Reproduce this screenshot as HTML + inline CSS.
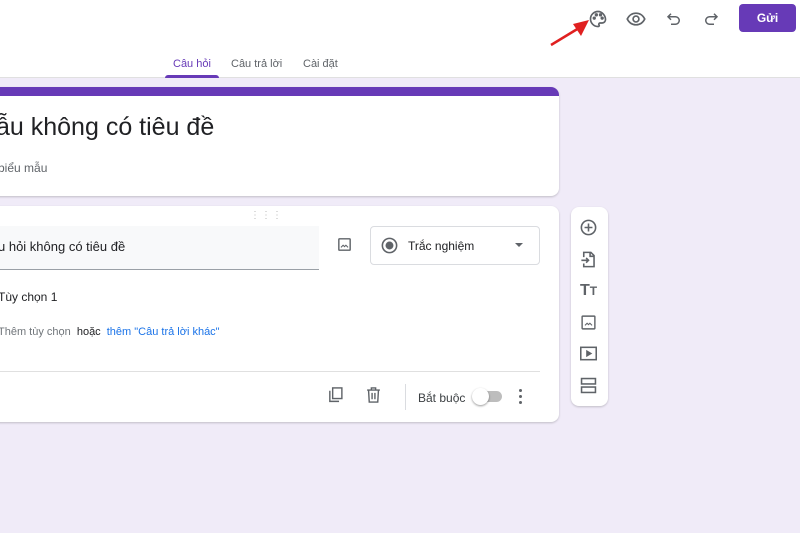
<!DOCTYPE html>
<html><head><meta charset="utf-8"><style>
*{margin:0;padding:0;box-sizing:border-box}
body{width:800px;height:533px;overflow:hidden;background:#f0ebf8;font-family:"Liberation Sans",Arial,sans-serif;position:relative;color:#202124}
.abs{position:absolute}
.hdr{left:0;top:0;width:800px;height:78px;background:#fff;border-bottom:1px solid #e0e0e0}
.tab{top:58px;font-size:11px;color:#5f6368}
.card{background:#fff;border-radius:8px;box-shadow:0 1px 2px rgba(0,0,0,.2)}
svg{position:absolute}
</style></head><body>
<div class="abs hdr"></div>
<div class="abs tab" style="left:173px;color:#673ab7">Câu hỏi</div>
<div class="abs tab" style="left:231px">Câu trả lời</div>
<div class="abs tab" style="left:303px">Cài đặt</div>
<div class="abs" style="left:165px;top:75px;width:54px;height:3px;background:#673ab7;border-radius:3px 3px 0 0"></div>
<svg style="left:588px;top:9px" width="20" height="20" viewBox="0 0 24 24" fill="none" stroke="#5f6368" stroke-width="2"><path d="M12 3a9 9 0 0 0 0 18c1.5 0 1.8-1 1.2-2-.6-1 0-2.2 1.3-2.2H17a4 4 0 0 0 4-4c0-5-4-9.8-9-9.8z"/><circle cx="7.5" cy="11" r="1" fill="#5f6368"/><circle cx="10" cy="7" r="1" fill="#5f6368"/><circle cx="15" cy="7" r="1" fill="#5f6368"/><circle cx="17" cy="11" r="1" fill="#5f6368"/></svg>
<svg style="left:626px;top:9px" width="20" height="20" viewBox="0 0 24 24" fill="none" stroke="#5f6368" stroke-width="2"><path d="M1.5 12C4 7 8 5 12 5s8 2 10.5 7C20 17 16 19 12 19S4 17 1.5 12z"/><circle cx="12" cy="12" r="3.5"/></svg>
<svg style="left:665px;top:9px" width="18" height="20" viewBox="0 0 24 24" fill="none" stroke="#5f6368" stroke-width="2"><path d="M8 5L4 9l4 4M4 9h10a5 5 0 0 1 0 10H8"/></svg>
<svg style="left:702px;top:9px" width="18" height="20" viewBox="0 0 24 24" fill="none" stroke="#5f6368" stroke-width="2"><path d="M16 5l4 4-4 4M20 9H10a5 5 0 0 0 0 10h6"/></svg>
<div class="abs" style="left:739px;top:4px;width:57px;height:28px;background:#673ab7;border-radius:4px;color:#fff;font-size:12px;font-weight:bold;text-align:center;line-height:28px">Gửi</div>
<svg style="left:545px;top:14px" width="50" height="36" viewBox="0 0 50 36"><line x1="6" y1="31" x2="34" y2="14" stroke="#e02020" stroke-width="2.5"/><polygon points="44,6 28,10 36,22" fill="#e02020"/></svg>
<div class="abs card" style="left:-10px;top:87px;width:569px;height:109px;overflow:hidden">
<div style="height:9px;background:#673ab7"></div>
</div>
<div class="abs" style="left:-4px;top:113px;font-size:25px;color:#202124">ẫu không có tiêu đề</div>
<div class="abs" style="left:-2px;top:161px;font-size:12px;color:#5f6368">biểu mẫu</div>
<div class="abs card" style="left:-10px;top:206px;width:569px;height:216px"></div>
<div class="abs" style="left:250px;top:210px;font-size:10px;color:#bbb;letter-spacing:1px">⋮⋮⋮</div>
<div class="abs" style="left:0;top:226px;width:319px;height:44px;background:#f8f9fa;border-bottom:1px solid #9aa0a6"></div>
<div class="abs" style="left:-2px;top:239px;font-size:13px">u hỏi không có tiêu đề</div>
<svg style="left:336px;top:236px" width="17" height="17" viewBox="0 0 24 24" fill="none" stroke="#5f6368" stroke-width="2"><rect x="4" y="4" width="16" height="16" rx="1"/><path d="M7 16l3-3 2 2 2-2 3 3" stroke-width="1.5"/></svg>
<div class="abs" style="left:370px;top:226px;width:170px;height:39px;border:1px solid #dadce0;border-radius:4px"></div>
<svg style="left:380px;top:236px" width="19" height="19" viewBox="0 0 24 24"><circle cx="12" cy="12" r="9" fill="none" stroke="#5f6368" stroke-width="2"/><circle cx="12" cy="12" r="5" fill="#5f6368"/></svg>
<div class="abs" style="left:408px;top:239px;font-size:12px">Trắc nghiệm</div>
<div class="abs" style="left:515px;top:243px;width:0;height:0;border-left:4px solid transparent;border-right:4px solid transparent;border-top:4px solid #5f6368"></div>
<div class="abs" style="left:-2px;top:290px;font-size:12px">Tùy chọn 1</div>
<div class="abs" style="left:-2px;top:326px;font-size:11px;color:#70757a">Thêm tùy chọn <span style="color:#202124;margin-left:3px">hoặc</span> <span style="color:#1a73e8;margin-left:3px">thêm "Câu trả lời khác"</span></div>
<div class="abs" style="left:0;top:371px;width:540px;height:1px;background:#e0e0e0"></div>
<svg style="left:327px;top:386px" width="17" height="18" viewBox="0 0 24 24" fill="none" stroke="#5f6368" stroke-width="2"><path d="M4 6v15h13"/><rect x="8" y="2" width="13" height="15"/></svg>
<svg style="left:365px;top:386px" width="17" height="18" viewBox="0 0 24 24" fill="none" stroke="#5f6368" stroke-width="2"><path d="M3 5h18M9 5V2h6v3M5 5l1 17h12l1-17M10 9v9M14 9v9"/></svg>
<div class="abs" style="left:405px;top:384px;width:1px;height:26px;background:#dadce0"></div>
<div class="abs" style="left:418px;top:391px;font-size:12px;color:#3c4043">Bắt buộc</div>
<div class="abs" style="left:476px;top:391px;width:26px;height:11px;border-radius:6px;background:#bdbdbd"></div>
<div class="abs" style="left:472px;top:388px;width:17px;height:17px;border-radius:50%;background:#fff;box-shadow:0 1px 2px rgba(0,0,0,.4)"></div>
<div class="abs" style="left:519px;top:389px;width:3px;height:3px;background:#5f6368;border-radius:50%;box-shadow:0 6px 0 #5f6368,0 12px 0 #5f6368"></div>
<div class="abs card" style="left:571px;top:207px;width:37px;height:199px"></div>
<svg style="left:579px;top:218px" width="19" height="19" viewBox="0 0 24 24" fill="none" stroke="#5f6368" stroke-width="2"><circle cx="12" cy="12" r="9"/><path d="M12 7v10M7 12h10"/></svg>
<svg style="left:579px;top:250px" width="19" height="19" viewBox="0 0 24 24" fill="none" stroke="#5f6368" stroke-width="2"><path d="M6 9V3h9l4 4v14H6v-4M14 3v5h5M3 13h9M9 10l3 3-3 3"/></svg>
<div class="abs" style="left:580px;top:282px;font-size:16px;font-weight:bold;color:#5f6368">T<span style="font-size:12px">T</span></div>
<svg style="left:580px;top:314px" width="17" height="17" viewBox="0 0 24 24" fill="none" stroke="#5f6368" stroke-width="2"><rect x="3" y="3" width="18" height="18" rx="1"/><path d="M7 16l3-3 2 2 2-2 3 3" stroke-width="1.5"/></svg>
<svg style="left:579px;top:345px" width="19" height="17" viewBox="0 0 24 22" fill="none" stroke="#5f6368" stroke-width="2"><rect x="2" y="3" width="20" height="16"/><path d="M10 8v6l5-3z" fill="#5f6368"/></svg>
<svg style="left:579px;top:377px" width="19" height="17" viewBox="0 0 24 22" fill="none" stroke="#5f6368" stroke-width="2"><rect x="3" y="2" width="18" height="7"/><rect x="3" y="13" width="18" height="7"/></svg>
</body></html>
